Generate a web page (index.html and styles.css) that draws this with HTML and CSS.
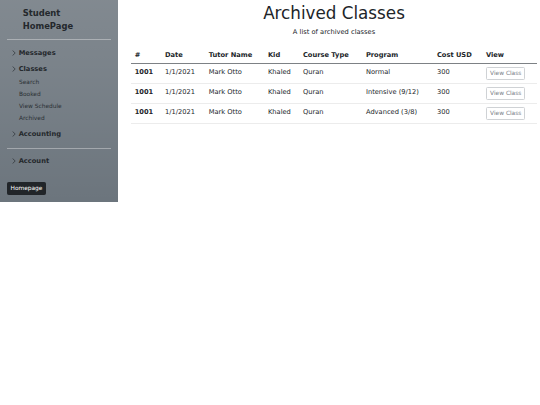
FILE: index.html
```html
<!DOCTYPE html>
<html lang="en">
<head>
<meta charset="utf-8">
<title>Archived Classes</title>
<link rel="stylesheet" href="styles.css">
</head>
<body>
<div class="page">
  <aside class="sidebar">
    <div class="brand">Student<br>HomePage</div>
    <hr class="divider">
    <div class="nav-item"><svg class="chev" viewBox="0 0 4 6"><polyline points="0.6,0.5 3.2,3 0.6,5.5"/></svg>Messages</div>
    <div class="nav-item nav-gap"><svg class="chev" viewBox="0 0 4 6"><polyline points="0.6,0.5 3.2,3 0.6,5.5"/></svg>Classes</div>
    <ul class="sub">
      <li>Search</li>
      <li>Booked</li>
      <li>View Schedule</li>
      <li>Archived</li>
    </ul>
    <div class="nav-item nav-acc"><svg class="chev" viewBox="0 0 4 6"><polyline points="0.6,0.5 3.2,3 0.6,5.5"/></svg>Accounting</div>
    <hr class="divider divider2">
    <div class="nav-item nav-account"><svg class="chev" viewBox="0 0 4 6"><polyline points="0.6,0.5 3.2,3 0.6,5.5"/></svg>Account</div>
    <button class="home-btn">Homepage</button>
  </aside>
  <main class="main">
    <h1 class="title">Archived Classes</h1>
    <p class="caption">A list of archived classes</p>
    <table class="table">
      <colgroup>
        <col class="c1"><col class="c2"><col class="c3"><col class="c4"><col class="c5"><col class="c6"><col class="c7"><col class="c8">
      </colgroup>
      <thead>
        <tr><th>#</th><th>Date</th><th>Tutor Name</th><th>Kid</th><th>Course Type</th><th>Program</th><th>Cost USD</th><th>View</th></tr>
      </thead>
      <tbody>
        <tr><th>1001</th><td>1/1/2021</td><td>Mark Otto</td><td>Khaled</td><td>Quran</td><td>Normal</td><td>300</td><td><button class="view-btn">View Class</button></td></tr>
        <tr><th>1001</th><td>1/1/2021</td><td>Mark Otto</td><td>Khaled</td><td>Quran</td><td>Intensive (9/12)</td><td>300</td><td><button class="view-btn">View Class</button></td></tr>
        <tr><th>1001</th><td>1/1/2021</td><td>Mark Otto</td><td>Khaled</td><td>Quran</td><td>Advanced (3/8)</td><td>300</td><td><button class="view-btn">View Class</button></td></tr>
      </tbody>
    </table>
  </main>
</div>
</body>
</html>
```

FILE: styles.css
```css
html, body {
  margin: 0;
  padding: 0;
  background: #fff;
}
body {
  font-family: "DejaVu Sans", sans-serif;
  font-size: 6.7px;
  line-height: 10px;
  color: #212529;
}
.page {
  display: flex;
  align-items: flex-start;
}
.sidebar {
  width: 118px;
  flex: 0 0 118px;
  box-sizing: border-box;
  padding: 7px 7px 6.7px 6.7px;
  background-color: #6c757d;
  background-image: linear-gradient(180deg, rgba(255,255,255,0.15), rgba(255,255,255,0));
  display: flex;
  flex-direction: column;
  align-items: flex-start;
}
.brand {
  font-size: 8.4px;
  line-height: 12.7px;
  font-weight: bold;
  padding-left: 16px;
  color: #24282c;
}
.divider {
  align-self: stretch;
  border: 0;
  height: 1px;
  background: rgba(255,255,255,0.35);
  margin: 6.7px 0 6.6px 0;
}
.divider2 {
  margin: 7.3px 0 5.5px 0;
}
.nav-item {
  display: flex;
  align-items: center;
  font-weight: bold;
  line-height: 13.4px;
  color: #24282c;
}
.nav-gap { margin-top: 2.6px; }
.nav-acc { margin-top: 2.9px; }
.chev {
  width: 4px;
  height: 6px;
  margin-left: 5.6px;
  margin-right: 2.4px;
  fill: none;
  stroke: #2b3035;
  stroke-width: 0.7;
}
.sub {
  list-style: none;
  margin: -0.6px 0 0 0;
  padding: 0 0 0 12.3px;
  font-size: 5.86px;
  line-height: 12.3px;
  color: #2b3035;
}
.home-btn {
  margin-top: 13.6px;
  font-family: "DejaVu Sans", sans-serif;
  font-size: 5.86px;
  font-weight: 400;
  height: 13.3px;
  width: 39.6px;
  padding: 0;
  box-sizing: border-box;
  border: 1px solid #212529;
  border-radius: 1.4px;
  background: #212529;
  color: #fff;
  line-height: 11px;
}
.main {
  flex: 1;
  min-width: 0;
  padding: 2.5px 3.3px 0 13.3px;
}
.title {
  margin: 0;
  text-align: center;
  font-size: 16.75px;
  line-height: 20px;
  font-weight: 400;
  color: #212529;
}
.caption {
  margin: 4.6px 0 0 0;
  text-align: center;
  line-height: 10px;
}
.table {
  width: 100%;
  table-layout: fixed;
  border-collapse: collapse;
  margin-top: 9.4px;
}
.c1 { width: 30.3px; }
.c2 { width: 43.7px; }
.c3 { width: 59.3px; }
.c4 { width: 35px; }
.c5 { width: 63px; }
.c6 { width: 71px; }
.c7 { width: 49px; }
.c8 { width: auto; }
.table th, .table td {
  text-align: left;
  vertical-align: top;
  padding: 3.1px 3.35px 3px;
  line-height: 10px;
  white-space: nowrap;
}
.table thead th {
  padding: 3.35px 3.35px 3.1px;
  border-bottom: 1px solid #7d8185;
  vertical-align: bottom;
}
.table tbody th, .table tbody td {
  border-bottom: 1px solid #ececec;
}
.view-btn {
  display: block;
  font-family: "DejaVu Sans", sans-serif;
  font-size: 5.86px;
  height: 12.9px;
  box-sizing: border-box;
  padding: 0 3.2px;
  border: 1px solid #cfd2d5;
  border-radius: 1.4px;
  background: #fff;
  color: #7a8087;
  line-height: 10px;
}
```
